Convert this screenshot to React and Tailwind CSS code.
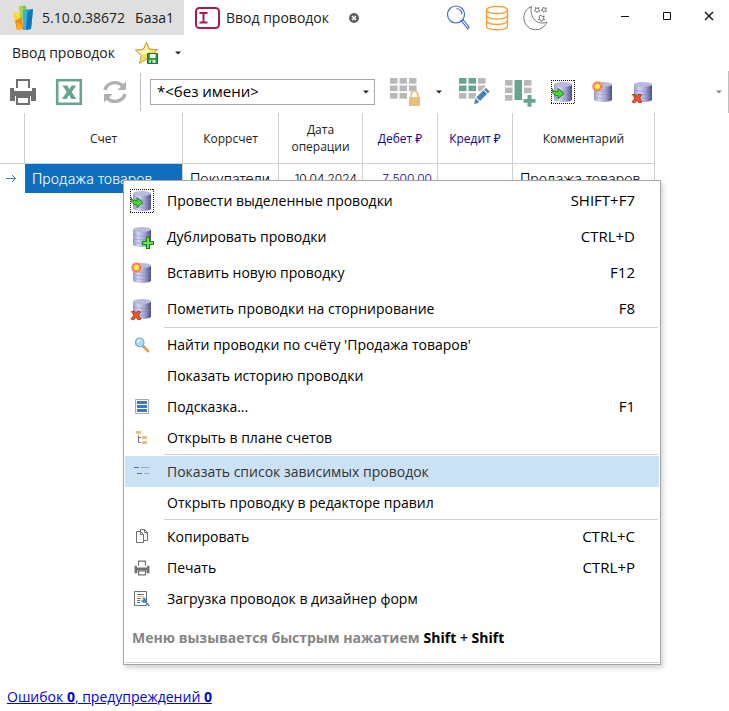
import { useId, useState } from 'react'

const columns = [
  { title: 'Счет', width: 158 },
  { title: 'Коррсчет', width: 96 },
  { title: 'Дата операции', width: 84 },
  { title: 'Дебет ₽', width: 75, money: true },
  { title: 'Кредит ₽', width: 75, money: true },
  { title: 'Комментарий', width: 142 },
]

const menuGroups = [
  {
    className: 'pt-px',
    rowClass: 'h-9',
    items: [
      { label: 'Провести выделенные проводки', keys: 'SHIFT+F7', icon: <DbIcon kind="post" /> },
      { label: 'Дублировать проводки', keys: 'CTRL+D', icon: <DbIcon kind="plus" /> },
      { label: 'Вставить новую проводку', keys: 'F12', icon: <DbIcon kind="new" /> },
      { label: 'Пометить проводки на сторнирование', keys: 'F8', icon: <DbIcon kind="delete" /> },
    ],
  },
  {
    className: 'pb-px',
    rowClass: 'h-[31px]',
    items: [
      { label: "Найти проводки по счёту 'Продажа товаров'", icon: <FindIcon /> },
      { label: 'Показать историю проводки' },
      { label: 'Подсказка...', keys: 'F1', icon: <HintIcon /> },
      { label: 'Открыть в плане счетов', icon: <TreeIcon /> },
    ],
  },
  {
    className: 'pb-px',
    rowClass: 'h-[31px]',
    items: [
      { label: 'Показать список зависимых проводок', icon: <DependentIcon />, active: true },
      { label: 'Открыть проводку в редакторе правил' },
    ],
  },
  {
    rowClass: 'h-[31px]',
    items: [
      { label: 'Копировать', keys: 'CTRL+C', icon: <CopyIcon /> },
      { label: 'Печать', keys: 'CTRL+P', icon: <PrinterIcon size={16} /> },
      { label: 'Загрузка проводок в дизайнер форм', icon: <FormDesignIcon /> },
    ],
  },
]

export default function App() {
  const [preset, setPreset] = useState('none')

  return (
    <div className="min-h-screen flex flex-col bg-white text-[#222] font-['Open_Sans','Noto_Sans',sans-serif] text-sm">
      <TitleBar />

      {/* Breadcrumb row */}
      <div className="h-9 flex items-center pl-3">
        <span>Ввод проводок</span>
        <button aria-label="В избранное" className="ml-5"><FavoriteIcon /></button>
        <button aria-label="Список избранного" className="ml-4"><Caret /></button>
      </div>

      {/* Toolbar */}
      <div className="h-[42px] flex items-center pl-[9px] border-r border-[#c0c0c0]">
        <button aria-label="Печать"><PrinterIcon size={28} /></button>
        <button aria-label="Экспорт в Excel" className="ml-[18px]"><ExcelIcon /></button>
        <button aria-label="Обновить" className="ml-[18px]"><RefreshIcon /></button>
        <div className="ml-[11px] w-px h-[38px] bg-[#c0c0c0]" />
        <div className="relative ml-[9px] w-[225px]">
          <select
            aria-label="Настройка вида"
            value={preset}
            onChange={e => setPreset(e.target.value)}
            className="block w-full h-[26px] pl-1.5 appearance-none border border-[#a8a8a8] bg-white text-black text-[15px]"
          >
            <option value="none">*&lt;без имени&gt;</option>
          </select>
          <span className="absolute right-1.5 top-[11px] pointer-events-none"><Caret /></span>
        </div>
        <button aria-label="Закрепить" className="ml-[14px]"><GridIcon kind="lock" /></button>
        <button aria-label="Варианты" className="ml-[15px]"><Caret /></button>
        <button aria-label="Изменить поля" className="ml-4"><GridIcon kind="edit" /></button>
        <button aria-label="Добавить столбец" className="ml-[14px]"><GridIcon kind="column" /></button>
        <button aria-label="Провести" className="ml-[15px]"><DbIcon kind="post" /></button>
        <button aria-label="Вставить" className="ml-4"><DbIcon kind="new" /></button>
        <button aria-label="Сторнировать" className="ml-4"><DbIcon kind="delete" /></button>
        <button aria-label="Ещё" className="ml-auto mr-[6px] text-[#888]"><Caret /></button>
      </div>

      <main className="relative flex-1">
        <EntriesTable />
        <ContextMenu />
      </main>

      <footer className="pl-[7px] pb-1">
        <a href="#errors" className="text-[#0000e0] underline">
          Ошибок <b>0</b>, предупреждений <b>0</b>
        </a>
      </footer>
    </div>
  )
}

function TitleBar() {
  return (
    <header className="h-[35px] flex items-stretch">
      <div className="w-[184px] shrink-0 flex items-center bg-[#dfdfdf] pl-3">
        <LogoIcon />
        <span className="ml-2">5.10.0.38672</span>
        <span className="ml-2.5">База1</span>
      </div>
      <div className="flex items-center pl-[11px]">
        <EntryIcon />
        <span className="ml-1.5">Ввод проводок</span>
        <button aria-label="Закрыть вкладку" className="ml-5">
          <svg width="10" height="10" viewBox="0 0 10 10">
            <circle cx="5" cy="5" r="5" fill="#606060" />
            <path d="M3 3l4 4M7 3l-4 4" stroke="#fff" strokeWidth="1.5" />
          </svg>
        </button>
      </div>
      <div className="flex items-center gap-[14px] ml-[87px]">
        <button aria-label="Поиск"><SearchIcon /></button>
        <button aria-label="Базы данных"><DatabasesIcon /></button>
        <button aria-label="Тёмная тема"><MoonIcon /></button>
      </div>
      <div className="flex items-center gap-8 ml-auto mr-[15px] pb-1">
        <button aria-label="Свернуть">
          <svg width="10" height="10"><path d="M1 5.5h8" stroke="#111" /></svg>
        </button>
        <button aria-label="Развернуть">
          <svg width="10" height="10"><path d="M1.5 1.5h7v7h-7z" fill="none" stroke="#111" /></svg>
        </button>
        <button aria-label="Закрыть">
          <svg width="10" height="10"><path d="M1 1l8 8M9 1l-8 8" stroke="#111" strokeWidth="1.4" /></svg>
        </button>
      </div>
    </header>
  )
}

function EntriesTable() {
  return (
    <table className="table-fixed w-[655px] border-separate border-spacing-0 text-xs">
      <colgroup>
        <col style={{ width: 25 }} />
        {columns.map(c => <col key={c.title} style={{ width: c.width }} />)}
      </colgroup>
      <thead>
        <tr className="h-[51px]">
          <th className="border-r border-b border-[#d0d0d0]" />
          {columns.map(c => (
            <th
              key={c.title}
              className={`border-r border-b border-[#d0d0d0] px-2 font-normal leading-[17px] ${c.money ? 'text-[#1a0098]' : 'text-[#222]'}`}
            >
              {c.title}
            </th>
          ))}
        </tr>
      </thead>
      <tbody className="font-['Inter',sans-serif] text-sm font-light text-black whitespace-nowrap">
        <tr className="h-[29px]">
          <td className="pl-1.5">
            <svg width="11" height="9" viewBox="0 0 11 9" fill="none" stroke="#3a84c4">
              <path d="M0 4.5h9.5M6 1l3.5 3.5L6 8" />
            </svg>
          </td>
          <td className="bg-[#106ebe] bg-clip-padding border-r border-[#d0d0d0] text-white pl-[7px]">Продажа товаров</td>
          <td className="border-r border-[#d0d0d0] pl-[7px]">Покупатели</td>
          <td className="border-r border-[#d0d0d0] pr-[5px] text-right text-xs">10.04.2024</td>
          <td className="border-r border-[#d0d0d0] pr-[5px] text-right text-xs text-[#1a0098]">7 500.00</td>
          <td className="border-r border-[#d0d0d0]" />
          <td className="border-r border-[#d0d0d0] pl-[7px]">Продажа товаров</td>
        </tr>
      </tbody>
    </table>
  )
}

function ContextMenu() {
  return (
    <div
      role="menu"
      className="absolute left-[123px] top-[67px] w-[538px] bg-white border border-[#a6a6a6] shadow-[2px_3px_5px_rgba(0,0,0,0.18)] p-px text-black"
    >
      {menuGroups.map((group, i) => (
        <div key={i} className={group.className}>
          {i > 0 && <div className="h-px mb-px ml-[39px] mr-px bg-[#d0d0d0]" />}
          {group.items.map(item => (
            <button
              key={item.label}
              role="menuitem"
              className={`w-full flex items-center pr-6 text-left ${group.rowClass} ${item.active ? 'bg-[#cbe2f6] text-[#333]' : 'hover:bg-[#e8f2fb]'}`}
            >
              <span className="w-[34px] mr-2 flex justify-center">{item.icon}</span>
              <span className="flex-1">{item.label}</span>
              <span className="text-[15px]">{item.keys}</span>
            </button>
          ))}
        </div>
      ))}
      <p className="h-[49px] pl-[7px] flex items-center gap-1 font-bold border-b border-[#d0d0d0]">
        <span className="text-[#858585]">Меню вызывается быстрым нажатием</span>
        <span>Shift <span className="font-semibold">+</span> Shift</span>
      </p>
    </div>
  )
}

/* ---------- Icons ---------- */

function Caret() {
  return (
    <svg width="6" height="4" viewBox="0 0 6 4" className="block">
      <path d="M0 0.5h6L3 3.5z" fill="currentColor" />
    </svg>
  )
}

function LogoIcon() {
  return (
    <svg width="22" height="26" viewBox="0 0 22 26">
      <path d="M7 1.5l7-1 1 12-6 2z" fill="#8cc832" />
      <path d="M7 1.5l4 1 1 12-4-1z" fill="#a8d84a" />
      <path d="M1 7l6 1 3 16-5 1z" fill="#ffd02a" />
      <path d="M1 7l5 0 2 8z" fill="#ffe04a" />
      <path d="M3 16l7-4 1 12-6 1z" fill="#f08a10" />
      <path d="M5 17l4 3 1 4-5 1z" fill="#fbb416" />
      <path d="M11 5l10-1-2 20-8 1z" fill="#1a96cc" />
      <path d="M11 5l4 1-1 19h-3z" fill="#35b2e4" />
      <path d="M21 4l-5 3-2 18 5-1z" fill="#1276b4" />
    </svg>
  )
}

function EntryIcon() {
  return (
    <svg width="25" height="22" viewBox="0 0 25 22" fill="none" stroke="#a81c4c">
      <rect x="1" y="1" width="23" height="20" rx="3.5" strokeWidth="2" />
      <path d="M4.5 6h8M4.5 15.500h8M8.500 6v9.500" strokeWidth="2" />
    </svg>
  )
}

function SearchIcon() {
  return (
    <svg width="25" height="26" viewBox="0 0 25 26" fill="none" stroke="#4463c8" strokeWidth="1.1">
      <circle cx="10" cy="9.500" r="8.500" />
      <path d="M10.500 3.500a6 6 0 0 1 5.500 6" />
      <path d="M15.500 16l1.500-1.500 6 7.500-1.200 1.800z" />
    </svg>
  )
}

function DatabasesIcon() {
  return (
    <svg width="24" height="26" viewBox="0 0 24 26" fill="none" stroke="#ff9a20" strokeWidth="1.3">
      <ellipse cx="12" cy="5" rx="10.500" ry="3.700" />
      <path d="M1.500 5v16c0 5 21 5 21 0V5" />
      <path d="M1.500 10.300c0 5 21 5 21 0M1.500 15.600c0 5 21 5 21 0" />
    </svg>
  )
}

function MoonIcon() {
  return (
    <svg width="26" height="26" viewBox="0 0 26 26" fill="none" stroke="#777" strokeWidth="1">
      <path d="M8.500 1.500A12 12 0 1 0 24 17C15 21 6 13 8.500 1.500z" />
      <path d="M12.500 2.500l1.500 1 2-1-.5 2 1.500 1.500-2 .3-1 1.500-1-1.700-2-.4 1.500-1.300z" />
      <path d="M20.500 2l1 1.300 2-.3-1 1.500 1 1.700-2-.2-1 1.300-.7-1.600-1.800-.6 1.800-1z" />
      <path d="M18 10l1 1.500 2.300-.5-1 2 1.400 1.700-2.200.1-1 1.800-1.200-1.700-2-.3 1.300-1.600-.4-2z" />
    </svg>
  )
}

function FavoriteIcon() {
  return (
    <svg width="24" height="24" viewBox="0 0 24 24">
      <path d="M11.500 1l3 7 8 .7-6 5.500 2 8-7-4.200-7 4.500 1.800-8.300-6-5.200 8-.7z" fill="#f8dc68" stroke="#b8881c" strokeWidth="0.800" />
      <path d="M11.500 4l1.500 5 4 1-10 4-4-4 6-1z" fill="#fff4bc" />
      <path d="M12.500 12.500h10v10h-10z" fill="#2e9e3a" stroke="#1c7428" />
      <path d="M15 13h5.500v4H15z" fill="#f4f4f4" />
      <path d="M14.500 19h6v3h-6z" fill="#d4ecd4" />
      <path d="M16 19.500h1.500V22H16z" fill="#1c7428" />
    </svg>
  )
}

function PrinterIcon({ size }) {
  return (
    <svg width={size} height={size} viewBox="0 0 28 28" fill="#707070">
      <path d="M7 1h14v9h-2V3H9v7H7z" />
      <path d="M1 10h4v3h18v-3h4v13h-5v-5H6v5H1z" />
      <path d="M7 18h14v9H7zM9 20v5h10v-5z" fillRule="evenodd" />
    </svg>
  )
}

function ExcelIcon() {
  return (
    <svg width="28" height="28" viewBox="0 0 28 28">
      <rect x="2.200" y="2.200" width="23.600" height="23.600" fill="#fff" stroke="#68a490" strokeWidth="2.600" />
      <path d="M7.500 7.500h4.900l2 3.700 2.300-3.700h4.600l-4.500 6.500 4.500 7h-4.900l-2.300-4-2.500 4H7l4.700-7z" fill="#68a490" />
    </svg>
  )
}

function RefreshIcon() {
  return (
    <svg width="28" height="28" viewBox="0 0 28 28">
      <path d="M4 12C6 4.500 16 2 22 8M24 16c-2 7.500-12 10-18 4" fill="none" stroke="#b0b0b0" strokeWidth="3.400" />
      <path d="M25 3.500V12h-8.500zM3 24.500V16h8.500z" fill="#b0b0b0" />
    </svg>
  )
}

const gridCells = [0, 1, 2].flatMap(row => [0, 1, 2].map(col => ({ row, col })))

function GridIcon({ kind }) {
  const isGreen = ({ row, col }) => kind === 'edit' && row < 2 && col < 2
  const isHidden = ({ row, col }) => (row === 2 && col === 2) || (kind === 'column' && col === 1)
  const top = kind === 'column' ? 3 : 1
  return (
    <svg width="32" height="30" viewBox="0 0 32 30">
      {gridCells.filter(c => !isHidden(c)).map(c => (
        <rect
          key={`${c.row}${c.col}`}
          x={1 + c.col * 9.500} y={top + c.row * 7.500}
          width="7.500" height="5.700"
          fill={isGreen(c) ? '#68a490' : '#b8b8b8'}
        />
      ))}
      {kind === 'lock' && (
        <>
          <path d="M19 15h13v15H19z" fill="#fff" />
          <path d="M20 20h11v9H20z" fill="#e8c080" />
          <path d="M22.200 20v-2.500a3.300 3.300 0 0 1 6.600 0V20" fill="none" stroke="#e8c080" strokeWidth="1.800" />
        </>
      )}
      {kind === 'edit' && (
        <>
          <path d="M14 26l3-6L28 9l5 5-12 13-7 2z" fill="#fff" />
          <path d="M26.500 12.500l1.500-1.300 3.300 3.300-1.500 1.500zM18.500 20.200l7-6.700 3.300 3.300-6.800 7zM17.500 21.500l3.500 3.500-4.500 2z" fill="#4a80b8" stroke="#4a80b8" strokeWidth="0.500" />
        </>
      )}
      {kind === 'column' && (
        <>
          <path d="M10.500 3h7.500v20h-7.500z" fill="#68a490" />
          <path d="M20 18h12v12H20z" fill="#fff" />
          <path d="M23.500 18h4v4h4v3.800h-4v4h-4v-4h-4V22h4z" fill="#68a490" />
        </>
      )}
    </svg>
  )
}

function DbIcon({ kind }) {
  const id = useId()
  return (
    <svg width="24" height="24" viewBox="0 0 24 24">
      <defs>
        <linearGradient id={id}>
          <stop offset="0" stopColor="#9a9ccc" />
          <stop offset="0.300" stopColor="#d4d6f4" />
          <stop offset="0.650" stopColor="#a0a2d0" />
          <stop offset="1" stopColor="#484a80" />
        </linearGradient>
      </defs>
      {kind === 'post' && (
        <path
          d="M0 0.500h24M0 23.500h24M0.500 0v24M23.500 0v24"
          stroke="#111" strokeDasharray="1 1" shapeRendering="crispEdges"
        />
      )}
      <path d="M3 4.500v15c0 3.300 18 3.300 18 0v-15z" fill={`url(#${id})`} />
      <ellipse cx="12" cy="4.500" rx="9" ry="2.500" fill="#b8bae0" />
      <path d="M3 9c1 3 17 3 18 0M3 12.500c1 3 17 3 18 0M3 16c1 3 17 3 18 0" fill="none" stroke="#8486b8" strokeWidth="0.500" />
      {kind === 'post' && (
        <path d="M1 8.500c1 3 3 3.500 6 3.200V8.500l6 5-6 5.200v-3C4 15.700 1 14.500 1 8.500z" fill="#4cd434" stroke="#157a10" strokeWidth="0.900" />
      )}
      {kind === 'plus' && (
        <path d="M16.500 12.500h3v4h4v3h-4v4h-3v-4h-4v-3h4z" fill="#74e05c" stroke="#128a18" strokeWidth="1.100" />
      )}
      {kind === 'new' && (
        <>
          <circle cx="6.500" cy="6.500" r="5.500" fill="#f8987c" opacity="0.700" />
          <circle cx="6.500" cy="6.500" r="3.800" fill="#ffc83a" stroke="#f0583a" strokeWidth="1.300" strokeDasharray="1.800 0.900" />
          <circle cx="6.500" cy="6.500" r="2.200" fill="#fff06a" />
        </>
      )}
      {kind === 'delete' && (
        <path d="M1.500 14.500l3 0 1.500 2 2-2.500 2.500 1-2 3 2.500 4-3 .8-2-2.800-2.500 3-2.500-1.200 3-3.500z" fill="#f0562c" stroke="#b42a14" strokeWidth="0.900" />
      )}
    </svg>
  )
}

function FindIcon() {
  return (
    <svg width="16" height="16" viewBox="0 0 16 16">
      <path d="M9.500 9.500l4.500 4.500" stroke="#e8a05c" strokeWidth="3" strokeLinecap="round" />
      <path d="M8.500 8.500l2 2" stroke="#999" strokeWidth="1.500" />
      <circle cx="5.700" cy="5.500" r="4.300" fill="#a8dcf8" stroke="#7cacd0" strokeWidth="1.200" />
      <path d="M3.500 5a2.500 2.500 0 0 1 3-2" fill="none" stroke="#fff" strokeWidth="1.200" />
    </svg>
  )
}

function HintIcon() {
  return (
    <svg width="14" height="16" viewBox="0 0 14 16">
      <path d="M0.500 0.500h13v14H0.500z" fill="#fff" stroke="#aaa" />
      <path d="M2 2h10v3H2zM2 6h10v3H2zM2 10h10v3H2z" fill="#3f7ab8" />
    </svg>
  )
}

function TreeIcon() {
  return (
    <svg width="14" height="16" viewBox="0 0 14 16">
      <path d="M1 1h5v3H1zM7 6h5v3H7zM7 11h5v3H7z" fill="#e8c080" />
      <path d="M3.500 5v7.500H6M3.500 7.500H6" fill="none" stroke="#777" />
    </svg>
  )
}

function DependentIcon() {
  return (
    <svg width="16" height="16" viewBox="0 0 16 16">
      <path d="M0 3.500h5M3 9.500h5" stroke="#3f7ab8" />
      <path d="M7 3.500h9M10 9.500h6" stroke="#a0a8b0" />
    </svg>
  )
}

function CopyIcon() {
  return (
    <svg width="14" height="16" viewBox="0 0 14 16" fill="#fff" stroke="#707070">
      <path d="M5.500 0.500h4l3 3v8h-7z" />
      <path d="M9.500 0.500v3h3" fill="none" />
      <path d="M1.500 2.500h4l3 3v8h-7z" />
      <path d="M5.500 2.500v3h3" fill="none" />
    </svg>
  )
}

function FormDesignIcon() {
  return (
    <svg width="16" height="16" viewBox="0 0 16 16" fill="none">
      <path d="M0.500 0.500h12v14H0.500z" fill="#fff" stroke="#707070" />
      <path d="M3 3.500h7M3 7.500h4M3 9.500h3M3 11.500h3" stroke="#707070" />
      <path d="M3 5.500h7" stroke="#e8c080" />
      <path d="M7 9l2-2.500 2 .5 1.500 2-.5 1.500 4 4-1 1-4-4-2 .5z" fill="#4a80b8" />
      <path d="M7 7l2 2" stroke="#fff" strokeWidth="1.200" />
    </svg>
  )
}
